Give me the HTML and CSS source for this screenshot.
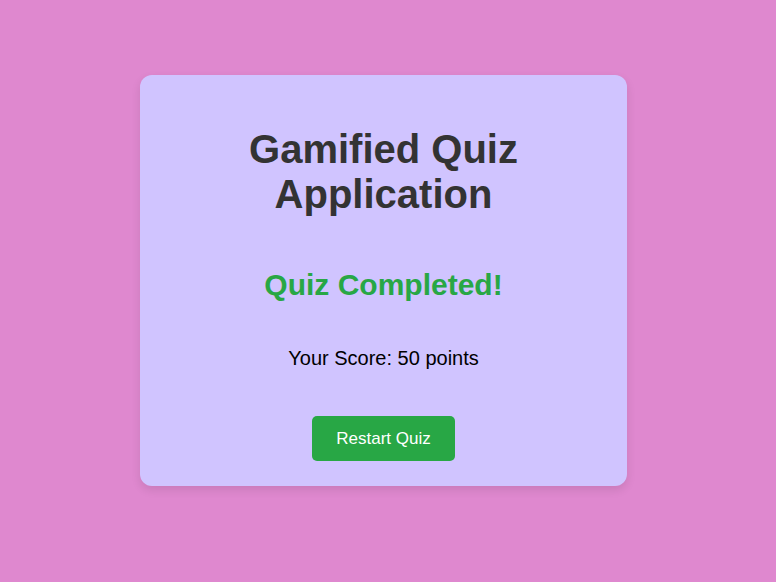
FILE: index.html
```html
<!DOCTYPE html>
<html>
<head>
<meta charset="utf-8">
<link rel="stylesheet" href="styles.css">
</head>
<body>
<div class="card">
  <h1 class="title">Gamified Quiz Application</h1>
  <h2 class="done">Quiz Completed!</h2>
  <p class="score">Your Score: 50 points</p>
  <button class="restart">Restart Quiz</button>
</div>
</body>
</html>
```
FILE: styles.css
```css
html, body {
  margin: 0;
  height: 100%;
}
body {
  background: #df88cf;
  font-family: "Liberation Sans", Arial, sans-serif;
  padding: 75px 0 0 140px;
  box-sizing: border-box;
}
.card {
  width: 487px;
  height: 411px;
  box-sizing: border-box;
  background: #d0c4ff;
  border-radius: 12px;
  box-shadow: 0 4px 10px rgba(0, 0, 0, 0.1);
  padding: 25px 20px;
  display: flex;
  flex-direction: column;
  align-items: center;
  text-align: center;
}
.title {
  font-size: 40px;
  font-weight: bold;
  color: #333;
  margin: 27px 40px 27px;
}
.done {
  font-size: 30px;
  font-weight: bold;
  color: #28a745;
  margin: 24px 0 25px;
}
.score {
  font-size: 20px;
  color: #000;
  margin: 20px 0 20px;
}
.restart {
  margin-top: 26px;
  background: #28a745;
  color: #fff;
  border: none;
  border-radius: 5px;
  font-family: "Liberation Sans", Arial, sans-serif;
  font-size: 17px;
  width: 143px;
  height: 45px;
  padding: 0;
}
```
